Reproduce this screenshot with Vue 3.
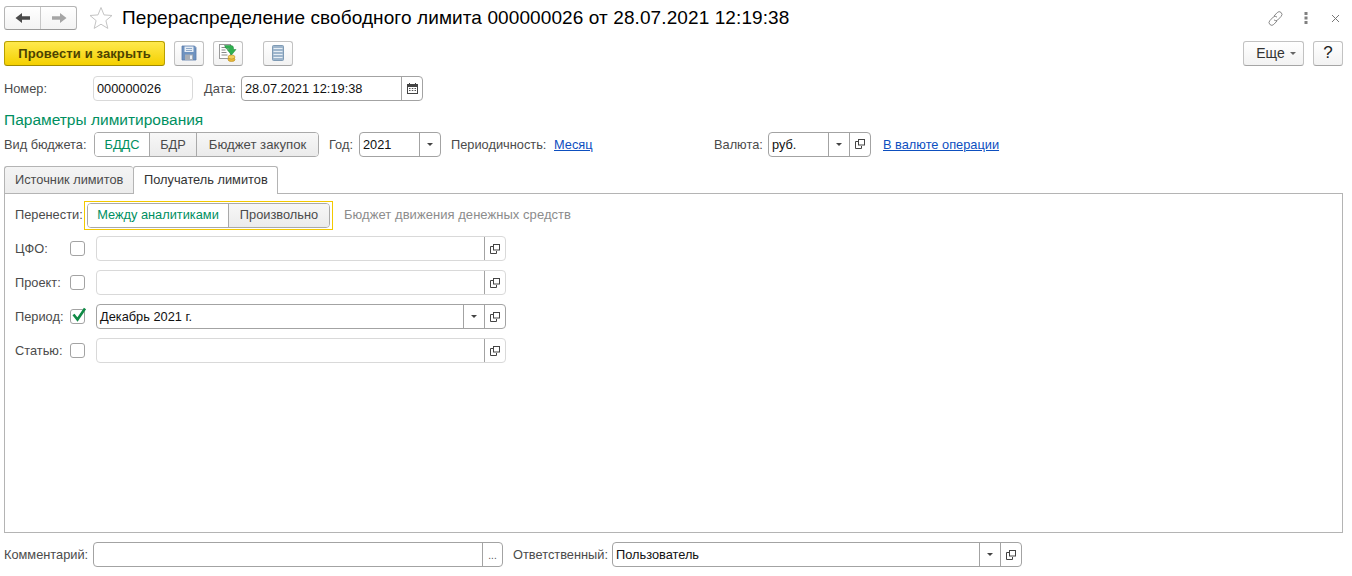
<template>
  <div class="form">
    <!-- Title row -->
    <div class="title-row">
      <div class="nav-box">
        <button class="nav-btn">
          <svg width="16" height="12" viewBox="0 0 16 12"><path d="M0.500 6L7 1v3.200h8v3.600H7V11z" fill="#4a4a4a" /></svg>
        </button>
        <button class="nav-btn nav-next">
          <svg width="16" height="12" viewBox="0 0 16 12"><path d="M15.500 6L9 1v3.200H1v3.600h8V11z" fill="#a5a5a5" /></svg>
        </button>
      </div>
      <svg class="star" width="24" height="24" viewBox="0 0 24 24">
        <path d="M12 1.500l3 7.400 8 .6-6.100 5.100 1.900 7.800L12 18.200 5.200 22.400l1.900-7.800L1 9.500l8-.6z" fill="#fff" stroke="#c4c4c4" />
      </svg>
      <h1 class="title">Перераспределение свободного лимита 000000026 от 28.07.2021 12:19:38</h1>
      <div class="window-icons">
        <svg width="17" height="17" viewBox="0 0 17 17" fill="none" stroke="#8a8a8a" stroke-width="1">
          <path d="M7 6l3.200-3.400a2.700 2.700 0 0 1 4 3.700l-3.400 3.600a2.700 2.700 0 0 1-3.800 0" />
          <path d="M10 11l-3.200 3.400a2.700 2.700 0 0 1-4-3.700l3.400-3.600a2.700 2.700 0 0 1 3.800 0" />
        </svg>
        <svg class="kebab" width="4" height="12" viewBox="0 0 4 12" fill="#808080">
          <rect x="0.500" y="0" width="3" height="3" /><rect x="0.500" y="4.500" width="3" height="3" /><rect x="0.500" y="9" width="3" height="3" />
        </svg>
        <svg class="close-icon" width="9" height="9" viewBox="0 0 9 9" stroke="#777" fill="none"><path d="M1 1l7 7M8 1l-7 7" /></svg>
      </div>
    </div>

    <!-- Command bar -->
    <div class="toolbar">
      <button class="btn-primary">Провести и закрыть</button>
      <button class="btn icon-btn save-btn">
        <svg width="16" height="16" viewBox="0 0 16 16">
          <path d="M1 1h12.500L15 2.500V15H1z" fill="#6f93c0" stroke="#5a7cab" stroke-width="0.800" />
          <rect x="3.500" y="1.500" width="9" height="5.500" fill="#e6edf5" />
          <path d="M5 3.500h6M5 5.500h6" stroke="#8fa9c8" />
          <rect x="4" y="9.500" width="8" height="5.500" fill="#a8aeb6" />
          <rect x="9" y="10.500" width="2" height="3.500" fill="#e9eff6" />
        </svg>
      </button>
      <button class="btn icon-btn post-btn">
        <svg width="20" height="18" viewBox="0 0 20 18">
          <rect x="1.500" y="0.500" width="11" height="14" fill="#fff" stroke="#9a9a9a" />
          <path d="M3.500 3.500h5M3.500 6h4M3.500 8.500h5M3.500 11h6" stroke="#8a8a8a" />
          <ellipse cx="13.500" cy="15.500" rx="3.500" ry="2" fill="#e8b93a" stroke="#b98c1a" stroke-width="0.600" />
          <ellipse cx="13.500" cy="13" rx="3.500" ry="2" fill="#f2cf5c" stroke="#b98c1a" stroke-width="0.600" />
          <path d="M6.500 1.500h6.500q2.500 0 2.500 2.500v1.500H18L13.500 11 9 5.500h2.500V4.500H8z" fill="#2fb04f" stroke="#1a8436" stroke-width="0.500" />
        </svg>
      </button>
      <button class="btn icon-btn list-btn">
        <svg width="12" height="16" viewBox="0 0 12 16">
          <rect x="0.500" y="0.500" width="11" height="15" rx="1" fill="#9db5cc" stroke="#7f9bb5" />
          <path d="M1.500 3.500h9M1.500 6.500h9M1.500 9.500h9M1.500 12.500h9" stroke="#e6eef5" />
        </svg>
      </button>
      <div class="toolbar-right">
        <button class="btn more-btn">Еще <span class="caret"></span></button>
        <button class="btn help-btn">?</button>
      </div>
    </div>

    <!-- Number and date -->
    <div class="row number-row">
      <span class="label number-label">Номер:</span>
      <div class="field number-field field-light"><span class="value">000000026</span></div>
      <span class="label date-label">Дата:</span>
      <div class="field date-field">
        <span class="value">28.07.2021 12:19:38</span>
        <span class="field-btn">
          <svg width="11" height="11" viewBox="0 0 11 11">
            <path d="M2.500 0v2M8.500 0v2" stroke="#444" />
            <rect x="0.500" y="1.500" width="10" height="9" fill="#fff" stroke="#444" />
            <rect x="0.500" y="1.500" width="10" height="2.500" fill="#444" />
            <path d="M2 5.500h1.500M4.800 5.500h1.500M7.500 5.500H9M2 7.500h1.500M4.800 7.500h1.500M7.500 7.500H9" stroke="#555" />
          </svg>
        </span>
      </div>
    </div>

    <h2 class="section-title">Параметры лимитирования</h2>

    <!-- Budget params -->
    <div class="row params-row">
      <span class="label budget-label">Вид бюджета:</span>
      <div class="toggle budget-toggle">
        <span v-for="(item, i) in budgetTypes" :key="item" class="toggle-item" :class="{ active: i === 0 }">{{ item }}</span>
      </div>
      <span class="label year-label">Год:</span>
      <div class="field year-field">
        <span class="value">2021</span>
        <span class="field-btn"><span class="caret dark"></span></span>
      </div>
      <span class="label period-label">Периодичность:</span>
      <a class="link period-link">Месяц</a>
      <span class="label currency-label">Валюта:</span>
      <div class="field currency-field">
        <span class="value">руб.</span>
        <span class="field-btn"><span class="caret dark"></span></span>
        <span class="field-btn"><svg width="10" height="10" viewBox="0 0 10 10"><path d="M3.500 2.500H.5v7h6V7" fill="none" stroke="#444" /><rect x="3.500" y="0.500" width="6" height="5.500" fill="none" stroke="#444" /></svg></span>
      </div>
      <a class="link currency-link">В валюте операции</a>
    </div>

    <!-- Tabs -->
    <div class="tabs">
      <div class="tab">Источник лимитов</div>
      <div class="tab tab-active">Получатель лимитов</div>
    </div>

    <div class="panel">
      <div class="transfer-row">
        <span class="label transfer-label">Перенести:</span>
        <div class="focus-frame">
          <div class="toggle transfer-toggle">
            <span class="toggle-item active">Между аналитиками</span>
            <span class="toggle-item">Произвольно</span>
          </div>
        </div>
        <span class="hint">Бюджет движения денежных средств</span>
      </div>

      <div v-for="row in dimensionRows" :key="row.label" class="dim-row">
        <span class="label dim-label">{{ row.label }}</span>
        <span class="checkbox">
          <svg v-if="row.checked" class="check" width="16" height="15" viewBox="0 0 16 15">
            <path d="M2.500 7.500l4 5L14 1.500" fill="none" stroke="#0f8a45" stroke-width="2.600" />
          </svg>
        </span>
        <div class="field dim-field" :class="{ 'field-light': !row.checked }">
          <span class="value">{{ row.value }}</span>
          <span v-if="row.checked" class="field-btn"><span class="caret dark"></span></span>
          <span class="field-btn"><svg width="10" height="10" viewBox="0 0 10 10"><path d="M3.500 2.500H.5v7h6V7" fill="none" stroke="#444" /><rect x="3.500" y="0.500" width="6" height="5.500" fill="none" stroke="#444" /></svg></span>
        </div>
      </div>
    </div>

    <!-- Footer -->
    <div class="row footer-row">
      <span class="label comment-label">Комментарий:</span>
      <div class="field comment-field">
        <span class="value"></span>
        <span class="field-btn dots">...</span>
      </div>
      <span class="label owner-label">Ответственный:</span>
      <div class="field owner-field">
        <span class="value">Пользователь</span>
        <span class="field-btn"><span class="caret dark"></span></span>
        <span class="field-btn"><svg width="10" height="10" viewBox="0 0 10 10"><path d="M3.500 2.500H.5v7h6V7" fill="none" stroke="#444" /><rect x="3.500" y="0.500" width="6" height="5.500" fill="none" stroke="#444" /></svg></span>
      </div>
    </div>
  </div>
</template>

<script setup>
const budgetTypes = ['БДДС', 'БДР', 'Бюджет закупок'];

const dimensionRows = [
  { label: 'ЦФО:', checked: false, value: '' },
  { label: 'Проект:', checked: false, value: '' },
  { label: 'Период:', checked: true, value: 'Декабрь 2021 г.' },
  { label: 'Статью:', checked: false, value: '' }
];
</script>

<style>
html, body {
  margin: 0;
  background: #fff;
}
</style>

<style scoped>
.form {
  width: 1352px;
  height: 576px;
  box-sizing: border-box;
  padding: 6px 9px 0 4px;
  font-family: "Liberation Sans", Arial, sans-serif;
  font-size: 12.800px;
  color: #4b4b4b;
  background: #fff;
  overflow: hidden;
}

button {
  font-family: inherit;
  padding: 0;
  cursor: pointer;
}

/* title row */
.title-row {
  display: flex;
  align-items: center;
  height: 24px;
}

.nav-box {
  display: flex;
  width: 73px;
  height: 24px;
  box-sizing: border-box;
  border: 1px solid #b5b5b5;
  border-bottom-color: #9a9a9a;
  border-radius: 3px;
  background: linear-gradient(#fff, #f3f3f3);
}

.nav-btn {
  flex: 1;
  border: none;
  background: none;
  display: flex;
  align-items: center;
  justify-content: center;
}

.nav-next {
  border-left: 1px solid #c8c8c8;
}

.star {
  margin-left: 12px;
}

.title {
  margin: 0 0 0 9px;
  font-size: 19px;
  letter-spacing: 0.1px;
  font-weight: 400;
  color: #000;
  white-space: nowrap;
}

.window-icons {
  margin-left: auto;
  display: flex;
  align-items: center;
}

.kebab {
  margin-left: 20px;
}

.close-icon {
  margin-left: 23px;
  margin-right: 3px;
}

/* toolbar */
.toolbar {
  display: flex;
  align-items: center;
  height: 26px;
  margin-top: 10px;
}

.btn-primary {
  width: 161px;
  height: 25px;
  border: 1px solid #b8a000;
  border-bottom-color: #a08a00;
  border-radius: 3px;
  background: linear-gradient(#ffe94d, #f4d000);
  color: #4d4300;
  font-size: 13px;
  letter-spacing: 0.12px;
  font-weight: 700;
}

.btn {
  height: 25px;
  box-sizing: border-box;
  border: 1px solid #c2c2c2;
  border-bottom-color: #a5a5a5;
  border-radius: 3px;
  background: linear-gradient(#fff, #f2f2f2);
  color: #333;
  display: flex;
  align-items: center;
  justify-content: center;
}

.icon-btn {
  width: 30px;
}

.save-btn,
.post-btn {
  margin-left: 9px;
}

.list-btn {
  margin-left: 20px;
}

.toolbar-right {
  margin-left: auto;
  display: flex;
  gap: 9px;
}

.more-btn {
  width: 61px;
  font-size: 14px;
  gap: 5px;
  padding-left: 5px;
}

.help-btn {
  width: 30px;
  font-size: 17px;
  color: #222;
}

.caret {
  display: inline-block;
  width: 0;
  height: 0;
  border-left: 3.500px solid transparent;
  border-right: 3.500px solid transparent;
  border-top: 3px solid #666;
}

.caret.dark {
  border-top-color: #444;
}

/* generic rows and fields */
.row {
  display: flex;
  align-items: center;
  height: 24px;
  white-space: nowrap;
}

.label {
  white-space: nowrap;
}

.field {
  display: flex;
  align-items: stretch;
  height: 25px;
  box-sizing: border-box;
  border: 1px solid #a3a3a3;
  border-radius: 4px;
  background: #fff;
}

.field-light {
  border-color: #d9d9d9;
}

.value {
  flex: 1;
  padding-left: 3px;
  line-height: 23px;
  color: #111;
  min-width: 0;
  overflow: hidden;
}

.field-btn {
  width: 20px;
  flex: none;
  border-left: 1px solid #a3a3a3;
  display: flex;
  align-items: center;
  justify-content: center;
}

.number-row {
  margin-top: 10px;
}

.number-label {
  width: 89px;
}

.number-field {
  width: 100px;
}

.date-label {
  margin-left: 11px;
  width: 37px;
}

.date-field {
  width: 182px;
}

.section-title {
  margin: 10px 0 0;
  height: 20px;
  font-size: 15.500px;
  font-weight: 400;
  line-height: 20px;
  color: #008f5f;
}

.params-row {
  margin-top: 2px;
}

.budget-label {
  width: 90px;
}

.toggle {
  display: flex;
  box-sizing: border-box;
  height: 25px;
  border: 1px solid #a9a9a9;
  border-radius: 4px;
  overflow: hidden;
}

.toggle-item {
  display: flex;
  align-items: center;
  justify-content: center;
  box-sizing: border-box;
  background: linear-gradient(#f7f7f7, #ebebeb);
  border-left: 1px solid #a9a9a9;
  color: #4b4b4b;
}

.toggle-item:first-child {
  border-left: none;
}

.toggle-item.active {
  background: #fff;
  color: #008f5f;
}

.budget-toggle {
  width: 225px;
}

.budget-toggle .toggle-item:nth-child(1) {
  width: 54px;
}

.budget-toggle .toggle-item:nth-child(2) {
  width: 47px;
}

.budget-toggle .toggle-item:nth-child(3) {
  flex: 1;
  font-size: 13.200px;
}

.year-label {
  margin-left: 10px;
  width: 30px;
}

.year-field {
  width: 82px;
}

.period-label {
  margin-left: 10px;
  width: 103px;
}

.link {
  color: #0d4fbf;
  text-decoration: underline;
}

.period-link {
  width: 160px;
}

.currency-label {
  width: 54px;
}

.currency-field {
  width: 103px;
}

.currency-link {
  margin-left: 12px;
}

/* tabs */
.tabs {
  display: flex;
  margin-top: 10px;
  height: 27px;
  position: relative;
  z-index: 1;
}

.tab {
  box-sizing: border-box;
  height: 27px;
  width: 129px;
  padding-left: 10px;
  line-height: 25px;
  border: 1px solid #b4b4b4;
  border-bottom: none;
  border-right: none;
  border-radius: 3px 3px 0 0;
  background: linear-gradient(#f4f4f4, #ececec);
  color: #4b4b4b;
}

.tab-active {
  width: 145px;
  height: 28px;
  background: #fff;
  border-right: 1px solid #b4b4b4;
  color: #333;
}

.panel {
  box-sizing: border-box;
  width: 1339px;
  height: 340px;
  border: 1px solid #b4b4b4;
  padding: 7px 0 0 10px;
}

.transfer-row {
  display: flex;
  align-items: center;
  height: 29px;
}

.transfer-label {
  width: 69px;
  margin-bottom: 2px;
}

.focus-frame {
  box-sizing: border-box;
  width: 249px;
  height: 29px;
  border: 1px solid #f3c900;
  padding: 1px 2px;
}

.transfer-toggle {
  width: 243px;
}

.transfer-toggle .toggle-item {
  padding-bottom: 2px;
}

.transfer-toggle .toggle-item:nth-child(1) {
  width: 140px;
}

.transfer-toggle .toggle-item:nth-child(2) {
  flex: 1;
}

.hint {
  margin-left: 11px;
  margin-bottom: 2px;
  font-size: 13px;
  letter-spacing: 0.05px;
  color: #8c8c8c;
}

.dim-row {
  display: flex;
  align-items: center;
  height: 25px;
  margin-top: 9px;
}

.transfer-row + .dim-row {
  margin-top: 6px;
}

.dim-label {
  width: 55px;
}

.checkbox {
  position: relative;
  width: 15px;
  height: 15px;
  box-sizing: border-box;
  border: 1px solid #a3a3a3;
  border-radius: 3px;
  background: #fff;
}

.check {
  position: absolute;
  left: 0;
  top: -3px;
}

.dim-field {
  margin-left: 11px;
  width: 410px;
}

/* footer */
.footer-row {
  height: 25px;
  margin-top: 9px;
}

.comment-label {
  width: 89px;
}

.comment-field {
  width: 410px;
}

.dots {
  align-items: flex-end;
  padding-bottom: 5px;
  font-size: 10px;
  color: #555;
  box-sizing: border-box;
}

.owner-label {
  margin-left: 10px;
  width: 99px;
}

.owner-field {
  width: 410px;
}
</style>
